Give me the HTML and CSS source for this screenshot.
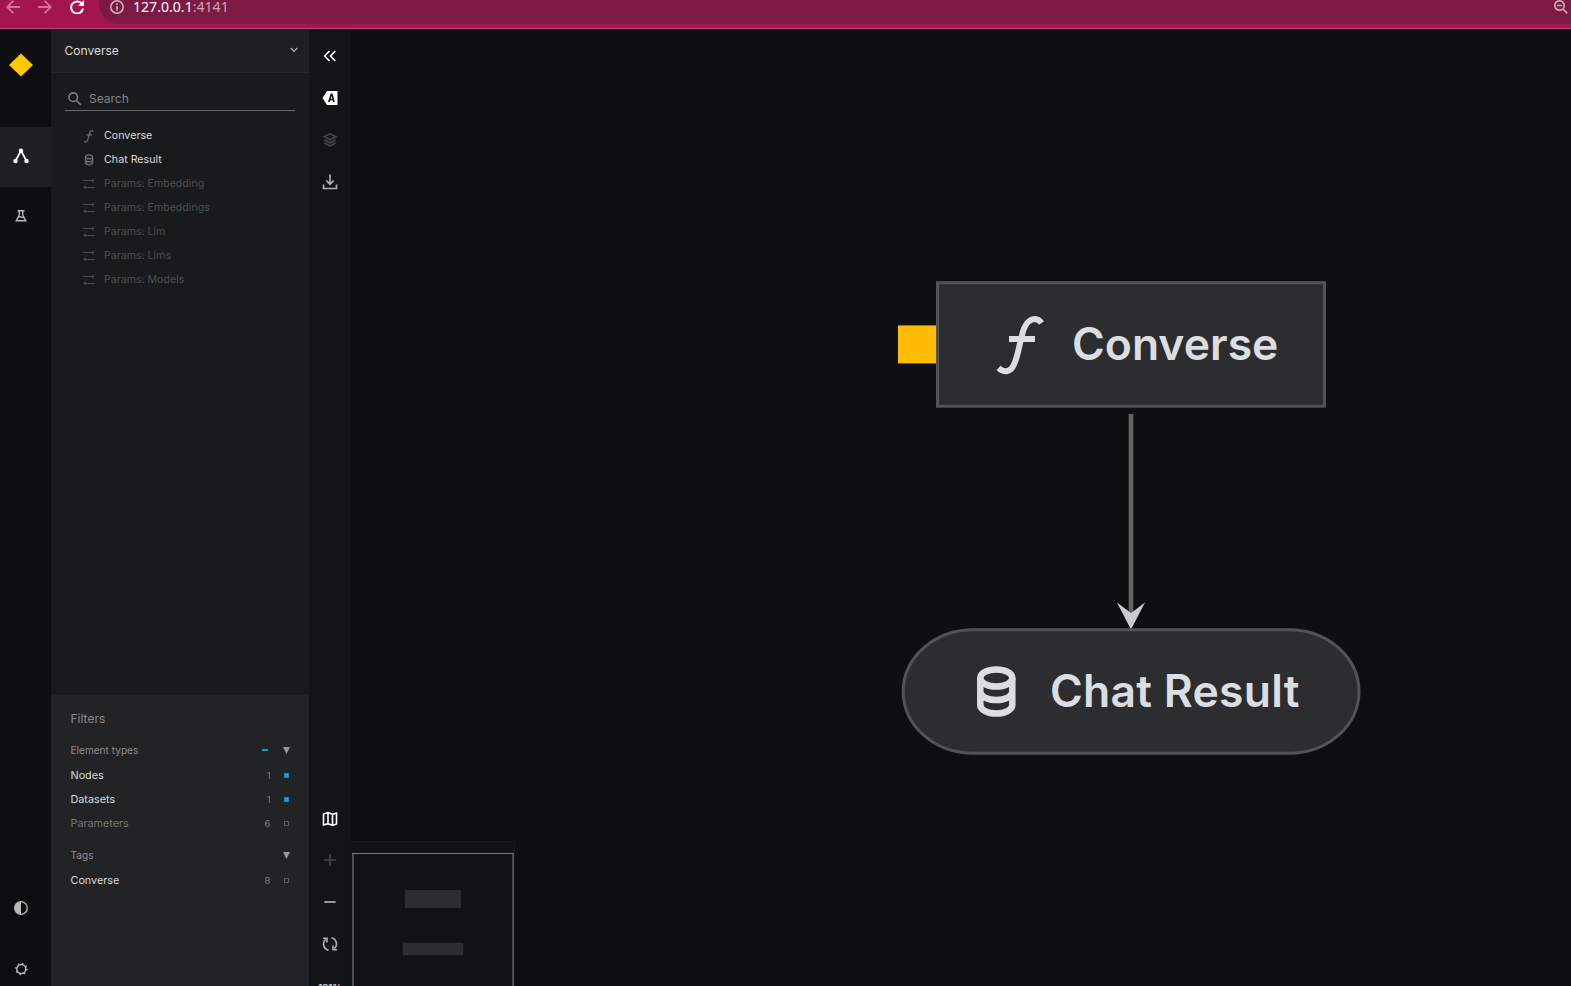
FILE: index.html
```html
<!DOCTYPE html>
<html lang="en">
<head>
<meta charset="utf-8">
<title>Kedro-Viz</title>
<link rel="stylesheet" href="styles.css">
</head>
<body>
<svg class="defs" aria-hidden="true">
  <symbol id="fn" viewBox="995 312 52 64"><path d="M998.500 368C1004 373 1010 372.500 1013.500 365.500C1018 356.500 1019 345.500 1022 335.500C1024.500 323.500 1030 319 1035 319C1038.500 319.200 1040 320.700 1041.500 323" fill="none" stroke="currentColor" stroke-width="6"/><path d="M1009 336H1035V342H1009Z" fill="currentColor"/></symbol>
  <symbol id="db" viewBox="970 660 52 64"><g fill="none" stroke="currentColor" stroke-width="6.500"><ellipse cx="996.300" cy="678" rx="16" ry="8.500"/><path d="M980.300 678V705A16 8.500 0 0 0 1012.300 705V678M980.300 691.500A16 8.500 0 0 0 1012.300 691.500"/></g></symbol>
  <symbol id="params" viewBox="0 0 12 14"><path d="M0 3.500H10M2 10.500H12" stroke="currentColor"/><path d="M9 1.500L12 3.500L9 5.500ZM3 8.500L0 10.500L3 12.500Z" fill="currentColor"/></symbol>
</svg>
<header class="browser">
  <svg class="nav-icon" viewBox="0 0 14 14"><path d="M14 7H1.500M7.500 .7L1.200 7L7.500 13.300"/></svg>
  <svg class="nav-icon" viewBox="0 0 14 14"><path d="M0 7H12.500M6.500 .7L12.800 7L6.500 13.300"/></svg>
  <svg class="nav-icon reload" viewBox="0 0 14 14"><path d="M12 4A6 6 0 1 0 13 8.500"/><path class="solid" d="M14 0V6H8Z"/></svg>
  <div class="address">
    <svg class="info" viewBox="0 0 14 14"><circle cx="7" cy="7" r="6.200"/><path d="M7 6V10.500M7 3.300V5"/></svg>
    <span class="host">127.0.0.1<span class="port">:4141</span></span>
    <svg class="zoomed" viewBox="0 0 14 14"><circle cx="5.500" cy="5.500" r="4.700"/><path d="M9 9L13.300 13.300M3 5.500H8"/></svg>
  </div>
</header>
<main class="app">
  <nav class="rail">
    <div class="logo"><svg viewBox="0 0 24 24"><path d="M12 .5L24 12L12 23.500L0 12Z" fill="#ffc900"/></svg></div>
    <a class="rail-item active"><svg viewBox="0 0 16 16"><path d="M2.500 13L8 2.500L13.500 13" fill="none" stroke="currentColor" stroke-width="1.700"/><g fill="currentColor"><circle cx="8" cy="2.800" r="2.200"/><circle cx="2.500" cy="13" r="2.200"/><circle cx="13.500" cy="13" r="2.200"/></g></svg></a>
    <a class="rail-item"><svg viewBox="0 0 16 16"><path d="M4.500 2.800H11.500M6.300 3V7L3.300 12.700H12.700L9.700 7V3M5.500 9.500Q7 8 8 9T10.500 8.700" fill="none" stroke="currentColor" stroke-width="1.400"/></svg></a>
    <a class="rail-item theme"><svg viewBox="0 0 16 16"><circle cx="8" cy="8" r="6.300" fill="none" stroke="currentColor" stroke-width="1.300"/><path d="M8 1.700A6.300 6.300 0 0 0 8 14.300Z" fill="currentColor"/></svg></a>
    <a class="rail-item settings"><svg viewBox="0 0 16 16"><circle cx="8.300" cy="8" r="4.500" fill="none" stroke="currentColor" stroke-width="1.500"/><circle class="teeth" cx="8.300" cy="8" r="5.500"/></svg></a>
  </nav>
  <aside class="sidebar">
    <div class="pipeline"><span>Converse</span><svg viewBox="0 0 8 6"><path d="M.7 1L4 4.300L7.300 1" fill="none" stroke="currentColor" stroke-width="1.300"/></svg></div>
    <div class="search"><svg viewBox="0 0 14 14"><circle cx="5.200" cy="5.200" r="4.300"/><path d="M8.500 8.500L13 13"/></svg><span>Search</span></div>
    <ul class="tree">
      <li><svg><use href="#fn"/></svg>Converse</li>
      <li><svg><use href="#db"/></svg>Chat Result</li>
      <li class="off"><svg><use href="#params"/></svg>Params: Embedding</li>
      <li class="off"><svg><use href="#params"/></svg>Params: Embeddings</li>
      <li class="off"><svg><use href="#params"/></svg>Params: Llm</li>
      <li class="off"><svg><use href="#params"/></svg>Params: Llms</li>
      <li class="off"><svg><use href="#params"/></svg>Params: Models</li>
    </ul>
    <section class="filters">
      <h2>Filters</h2>
      <div class="group"><span>Element types</span><i class="dash"></i><svg class="caret" viewBox="0 0 7 7"><path d="M0 0H7L3.500 7Z"/></svg></div>
      <div class="row"><span>Nodes</span><b>1</b><i class="box on"></i></div>
      <div class="row"><span>Datasets</span><b>1</b><i class="box on"></i></div>
      <div class="row muted"><span>Parameters</span><b>6</b><i class="box"></i></div>
      <div class="group tags"><span>Tags</span><svg class="caret" viewBox="0 0 7 7"><path d="M0 0H7L3.500 7Z"/></svg></div>
      <div class="row"><span>Converse</span><b>8</b><i class="box"></i></div>
    </section>
  </aside>
  <div class="tools">
    <button class="bright"><svg viewBox="0 0 16 16"><path d="M7.500 3L2.700 8L7.500 13M13.300 3L8.500 8L13.300 13" fill="none" stroke="currentColor" stroke-width="1.600"/></svg></button>
    <button class="bright"><svg viewBox="0 0 16 16"><path fill="currentColor" fill-rule="evenodd" d="M5 1H15.500V15H5L.5 8ZM8.700 3.500L6 12H7.900L8.300 10.300H10.600L11 12H12.800L10.500 3.500ZM9.500 5.700L10.200 8.800H8.700Z"/></svg></button>
    <button class="dim"><svg viewBox="0 0 16 16"><path d="M8 1.800L13.700 4.800L8 7.800L2.300 4.800ZM2.300 7.800L8 10.900L13.700 7.800M2.300 10.900L8 14L13.700 10.900" fill="none" stroke="currentColor" stroke-width="1.800"/></svg></button>
    <button><svg viewBox="0 0 16 16"><path d="M8 .5V10M4.300 6.500L8 10.200L11.700 6.500M1.500 10.500V14.500H14.500V10.500" fill="none" stroke="currentColor" stroke-width="1.700"/></svg></button>
    <button class="bright map"><svg viewBox="0 0 16 16"><path d="M1.500 3L6 1.500L10.500 3.300L14.500 2V13L10.500 14.500L6 12.700L1.500 14ZM6 1.500V12.700M10.500 3.300V14.500" fill="none" stroke="currentColor" stroke-width="1.600"/></svg></button>
    <button class="dim"><svg viewBox="0 0 16 16"><path d="M2 8H14M8 2V14" stroke="currentColor" stroke-width="1.700"/></svg></button>
    <button><svg viewBox="0 0 16 16"><path d="M2.300 8H13.700" stroke="currentColor" stroke-width="1.700"/></svg></button>
    <button><svg viewBox="0 0 16 16"><path d="M6.500 14.200A6.300 6.300 0 0 1 3.600 3.400M9.500 1.800A6.300 6.300 0 0 1 12.400 12.600M1 2.300H5V6.500M15 13.700H11V9.500" fill="none" stroke="currentColor" stroke-width="1.600"/></svg></button>
    <span class="scale">181%</span>
  </div>
  <section class="canvas">
    <svg class="graph" viewBox="351 29 1220 957">
      <path d="M1131 414V614" stroke="#636363" stroke-width="4.600"/>
      <path d="M1117 602.500L1131 613L1145 602.500L1131 629.500Z" fill="#c8cbcf"/>
      <rect x="898" y="325.400" width="39" height="38" fill="#ffbc00"/>
      <rect x="937.500" y="282.700" width="387" height="123.500" class="node"/>
      <use href="#fn" x="995" y="312" width="52" height="64" class="glyph"/>
      <text class="label" x="1072" y="359.500">Converse</text>
      <rect x="903.200" y="629.700" width="455.800" height="123.500" rx="70" ry="61.750" class="node"/>
      <use href="#db" x="970" y="660" width="52" height="64" class="glyph"/>
      <text class="label wide" x="1050" y="706.500">Chat Result</text>
    </svg>
    <div class="minimap"><svg viewBox="351 841 164 145"><path d="M353 853V990M513 853V990" stroke="#4c4d4f" stroke-width="2"/><path d="M352 853.500H514" stroke="#77787a"/><rect x="405" y="890" width="56" height="18" fill="#2c2d2f"/><rect x="402.700" y="942.700" width="60.500" height="12.500" fill="#2c2d2f"/></svg></div>
  </section>
</main>
</body>
</html>
```
FILE: styles.css
```css
* { box-sizing: border-box; }
body { margin: 0; height: 986px; overflow: hidden; background: #0f0f11; font-family: Inter, sans-serif; display: flex; flex-direction: column; }
svg { display: block; flex: none; }
.defs { width: 0; height: 0; position: absolute; }

.browser { height: 29px; flex: none; display: flex; background: #a3154f; border-bottom: 1px solid #bf4579; padding-left: 6px; overflow: hidden; }
.nav-icon { width: 14px; height: 14px; margin-right: 18px; fill: none; stroke: #d1739a; stroke-width: 1.8; }
.nav-icon.reload { stroke: #fff; stroke-width: 2; margin-right: 15px; }
.nav-icon .solid { fill: #fff; stroke: none; }
.address { flex: 1; height: 24px; background: #7d1a43; border-bottom-left-radius: 20px; display: flex; align-items: flex-start; padding-left: 11px; }
.info { width: 14px; height: 14px; fill: none; stroke: #d0b3c0; stroke-width: 1.6; margin-right: 9px; }
.host { flex: 1; font: 14.1px/18px "Noto Sans", sans-serif; margin-top: -2px; color: #fff; }
.port { color: #cba3b4; }
.zoomed { width: 14px; height: 14px; margin-right: 3px; fill: none; stroke: #c9a9b6; stroke-width: 1.7; }

.app { flex: 1; min-height: 0; display: flex; }
.rail { width: 51px; flex: none; background: #0e0e10; display: flex; flex-direction: column; color: #b9b9ba; }
.logo { height: 98px; flex: none; padding: 24px 0 0 9px; }
.logo svg { width: 24px; height: 24px; }
.rail-item { height: 60px; flex: none; display: flex; align-items: center; justify-content: center; padding: 0 9px 2px 0; }
.rail-item svg { width: 16px; height: 16px; }
.rail-item.active { background: #1e1f21; color: #fff; }
.rail-item.theme { margin-top: 632px; }
.rail-item.settings { padding-bottom: 0; }
.teeth { fill: none; stroke: currentColor; stroke-width: 1.4; stroke-dasharray: 1.5 2.82; }

.sidebar { width: 258px; flex: none; background: #191a1c; display: flex; flex-direction: column; }
.pipeline { height: 44px; flex: none; background: #1e1f21; border-bottom: 1px solid #242527; display: flex; align-items: center; justify-content: space-between; padding: 0 11px 0 13.500px; font-size: 12px; color: #dcdcdd; }
.pipeline svg { width: 8px; height: 6px; color: #a5a5a6; margin-top: -2px; }
.search { height: 26px; flex: none; margin: 12px 14px 0; border-bottom: 1px solid #666768; display: flex; align-items: center; color: #858687; font-size: 12px; padding: 2px 0 0 3px; gap: 8px; }
.search svg { width: 14px; height: 14px; fill: none; stroke: #7c7d7e; stroke-width: 1.6; }
.search span { margin-left: -1px; }
.tree { list-style: none; margin: 12px 0 0; padding: 0 0 0 32px; flex: 1; font-size: 10.7px; color: #d9d9da; }
.tree li { height: 24px; display: flex; align-items: center; gap: 9px; }
.tree svg { width: 12px; height: 14px; color: #666768; margin-top: 2px; }
.tree .off { color: #4d4e4f; font-size: 10.6px; }
.tree .off svg { color: #4a4b4c; }

.filters { height: 291px; flex: none; background: #222325; padding: 15px 19px 0 19.500px; font-size: 10.8px; }
.filters h2 { margin: 0 0 12px; font-size: 12px; line-height: 18px; font-weight: 400; color: #88898a; }
.group, .row { display: flex; align-items: center; height: 24px; }
.group { height: 20px; margin-bottom: 3px; font-size: 10.1px; color: #8d8e8f; }
.group.tags { margin-top: 10px; }
.group span, .row span { flex: 1; }
.dash { width: 6px; height: 2px; background: #00a0df; margin-right: 15px; }
.caret { width: 7px; height: 7px; fill: #989899; }
.row { color: #d9d9da; }
.row b { font-weight: 400; font-size: 9.5px; color: #7d7e7f; margin-right: 13.500px; }
.row.muted { color: #737475; }
.box { width: 5px; height: 5px; border: 1px solid #5b5c5d; margin-right: 1px; }
.box.on { background: #00a8ec; border-color: #078dc3; }

.tools { width: 42px; flex: none; background: #131416; display: flex; flex-direction: column; padding-top: 6px; }
.tools button { height: 42px; flex: none; border: 0; padding: 0; background: none; color: #adaeae; display: flex; align-items: center; justify-content: center; }
.tools button svg { width: 16px; height: 16px; }
.tools .bright { color: #fff; }
.tools .dim { color: #434445; }
.tools .map { margin-top: 595px; margin-bottom: -1px; }
.scale { font-size: 9.5px; line-height: 14px; height: 14px; flex: none; margin-top: 16px; text-align: center; color: #d9d9da; font-weight: 600; }

.canvas { flex: 1; min-width: 0; position: relative; background: #0f0f11; }
.graph { width: 1220px; height: 957px; }
.node { fill: #2c2d2f; stroke: #525354; stroke-width: 3; }
.glyph { color: #dbdde0; }
.label { font: 600 44.500px Inter, sans-serif; fill: #dbdde0; }
.label.wide { letter-spacing: .24px; }
.minimap { position: absolute; left: 0; bottom: 0; width: 164px; height: 145px; background: #111214; border: solid #17181a; border-width: 1px 1px 0 0; overflow: hidden; }
.minimap svg { width: 164px; height: 145px; margin-top: -1px; }
```
